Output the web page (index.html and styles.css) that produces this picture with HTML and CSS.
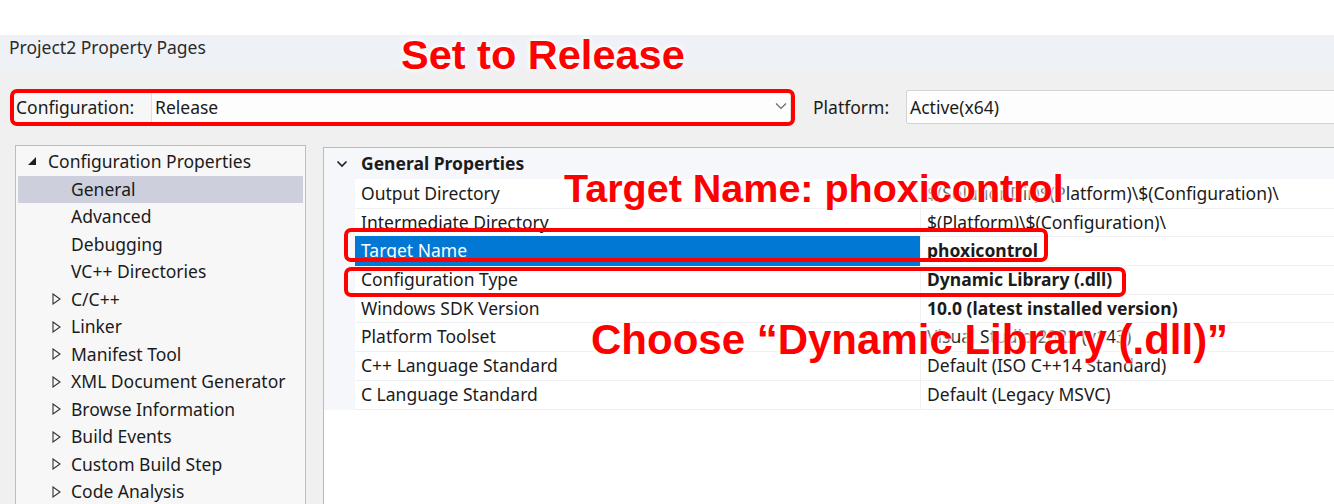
FILE: index.html
```html
<!DOCTYPE html>
<html lang="en">
<head>
<meta charset="utf-8">
<title>Project2 Property Pages</title>
<link rel="stylesheet" href="styles.css">
</head>
<body>
<div class="window">
  <div class="topgap"></div>
  <div class="titlebar">Project2 Property Pages</div>
  <div class="main">
    <div class="config-row">
      <div class="config-field">
        <span class="cfg-label">Configuration:</span>
        <div class="combo combo-config">
          <span>Release</span>
          <svg class="chev" width="12" height="8" viewBox="0 0 12 8"><path d="M1 1.5 L6 6.5 L11 1.5" fill="none" stroke="#6a6a6a" stroke-width="1.2"/></svg>
        </div>
      </div>
      <span class="plat-label">Platform:</span>
      <div class="combo combo-plat"><span>Active(x64)</span></div>
    </div>
    <div class="panes">
      <div class="tree">
        <div class="trow parent">
          <svg class="tri" width="10" height="10" viewBox="0 0 10 10"><polygon points="9,1 9,9 1,9" fill="#1e1e1e"/></svg>
          <span>Configuration Properties</span>
        </div>
        <div class="trow child sel"><span>General</span></div>
        <div class="trow child"><span>Advanced</span></div>
        <div class="trow child"><span>Debugging</span></div>
        <div class="trow child"><span>VC++ Directories</span></div>
        <div class="trow child exp"><svg class="tri2" width="9" height="12" viewBox="0 0 9 12"><polygon points="1,1 8,6 1,11" fill="none" stroke="#333" stroke-width="1.1"/></svg><span>C/C++</span></div>
        <div class="trow child exp"><svg class="tri2" width="9" height="12" viewBox="0 0 9 12"><polygon points="1,1 8,6 1,11" fill="none" stroke="#333" stroke-width="1.1"/></svg><span>Linker</span></div>
        <div class="trow child exp"><svg class="tri2" width="9" height="12" viewBox="0 0 9 12"><polygon points="1,1 8,6 1,11" fill="none" stroke="#333" stroke-width="1.1"/></svg><span>Manifest Tool</span></div>
        <div class="trow child exp"><svg class="tri2" width="9" height="12" viewBox="0 0 9 12"><polygon points="1,1 8,6 1,11" fill="none" stroke="#333" stroke-width="1.1"/></svg><span>XML Document Generator</span></div>
        <div class="trow child exp"><svg class="tri2" width="9" height="12" viewBox="0 0 9 12"><polygon points="1,1 8,6 1,11" fill="none" stroke="#333" stroke-width="1.1"/></svg><span>Browse Information</span></div>
        <div class="trow child exp"><svg class="tri2" width="9" height="12" viewBox="0 0 9 12"><polygon points="1,1 8,6 1,11" fill="none" stroke="#333" stroke-width="1.1"/></svg><span>Build Events</span></div>
        <div class="trow child exp"><svg class="tri2" width="9" height="12" viewBox="0 0 9 12"><polygon points="1,1 8,6 1,11" fill="none" stroke="#333" stroke-width="1.1"/></svg><span>Custom Build Step</span></div>
        <div class="trow child exp"><svg class="tri2" width="9" height="12" viewBox="0 0 9 12"><polygon points="1,1 8,6 1,11" fill="none" stroke="#333" stroke-width="1.1"/></svg><span>Code Analysis</span></div>
      </div>
      <div class="grid">
        <div class="ghead">
          <div class="gutter-h"><svg width="12" height="8" viewBox="0 0 12 8"><path d="M1.5 1.5 L6 6 L10.5 1.5" fill="none" stroke="#1e1e1e" stroke-width="1.6"/></svg></div>
          <div class="ghead-title">General Properties</div>
        </div>
        <div class="prow"><div class="gut"></div><div class="pname">Output Directory</div><div class="pval">$(SolutionDir)$(Platform)\$(Configuration)\</div></div>
        <div class="prow"><div class="gut"></div><div class="pname">Intermediate Directory</div><div class="pval">$(Platform)\$(Configuration)\</div></div>
        <div class="prow"><div class="gut"></div><div class="pname selected">Target Name</div><div class="pval bold">phoxicontrol</div></div>
        <div class="prow"><div class="gut"></div><div class="pname">Configuration Type</div><div class="pval bold">Dynamic Library (.dll)</div></div>
        <div class="prow"><div class="gut"></div><div class="pname">Windows SDK Version</div><div class="pval bold">10.0 (latest installed version)</div></div>
        <div class="prow"><div class="gut"></div><div class="pname">Platform Toolset</div><div class="pval">Visual Studio 2022 (v143)</div></div>
        <div class="prow"><div class="gut"></div><div class="pname">C++ Language Standard</div><div class="pval">Default (ISO C++14 Standard)</div></div>
        <div class="prow"><div class="gut"></div><div class="pname">C Language Standard</div><div class="pval">Default (Legacy MSVC)</div></div>
      </div>
    </div>
  </div>

  <div class="redbox box-config"></div>
  <div class="redbox box-target"></div>
  <div class="redbox box-type"></div>
  <div class="note note-release">Set to Release</div>
  <div class="note note-target">Target Name: phoxicontrol</div>
  <div class="note note-choose">Choose “Dynamic Library (.dll)”</div>
</div>
</body>
</html>
```

FILE: styles.css
```css
* { box-sizing: border-box; }
html, body { margin: 0; padding: 0; }
body {
  width: 1334px;
  height: 504px;
  overflow: hidden;
  background: #ffffff;
  font-family: "Noto Sans", "Open Sans", sans-serif;
  font-size: 17.5px;
  color: #1b1b1b;
}
.window {
  position: relative;
  width: 1334px;
  height: 504px;
  overflow: hidden;
}
.topgap { height: 35px; background: #ffffff; }
.titlebar {
  height: 35px;
  line-height: 25px;
  padding-left: 9px;
  background: #eef2f7;
  color: #2b2b2b;
}
.main {
  background: #f0f0f0;
  height: 434px;
  padding-top: 20px;
}
.config-row {
  display: flex;
  align-items: stretch;
  height: 34px;
}
.config-field {
  display: flex;
  flex-shrink: 0;
  margin-left: 14px;
  width: 777px;
  background: #f7f7f7;
}
.cfg-label {
  width: 137px;
  flex-shrink: 0;
  padding-left: 2px;
  line-height: 35px;
}
.combo {
  display: flex;
  align-items: center;
  justify-content: space-between;
  background: #fdfdfd;
  border: 1px solid #d4d4d4;
  line-height: 32px;
}
.combo-config {
  flex: 1;
  padding-left: 3px;
  padding-right: 3px;
  border-color: #e0e0e0;
}
.combo-plat {
  flex-shrink: 0;
  width: 440px;
  padding-left: 3px;
  border-radius: 2px;
}
.plat-label {
  flex-shrink: 0;
  margin-left: 22px;
  width: 93px;
  line-height: 35px;
}
.chev { margin-bottom: 2px; }

.panes {
  display: flex;
  align-items: flex-start;
  margin-top: 21px;
}
.tree {
  flex-shrink: 0;
  margin-left: 15px;
  width: 291px;
  height: 370px;
  background: #f7f7f7;
  border: 1px solid #bdbdbd;
  padding-top: 2px;
}
.trow {
  position: relative;
  height: 27.5px;
  line-height: 27.5px;
  margin: 0 2px;
  display: flex;
  align-items: center;
  white-space: nowrap;
}
.trow.parent { padding-left: 9px; }
.trow.parent .tri { margin-right: 11px; margin-bottom: 1px; }
.trow.child { padding-left: 53px; }
.trow.child.exp { padding-left: 34px; }
.trow .tri2 { margin-right: 10px; }
.trow.sel { background: #cdd0dc; }

.grid {
  flex-shrink: 0;
  margin-left: 17px;
  margin-top: 2px;
  width: 1030px;
  height: 370px;
  background: #ffffff;
  border: 1px solid #bcbcbc;
}
.ghead {
  display: flex;
  height: 31px;
  line-height: 31px;
  background: #f6f7fa;
}
.gutter-h {
  width: 31px;
  display: flex;
  align-items: center;
  justify-content: center;
  padding-left: 4px;
}
.ghead-title {
  padding-left: 6px;
  font-weight: bold;
}
.prow {
  display: grid;
  grid-template-columns: 31px 565px 1fr;
  height: 28.7px;
  line-height: 28.7px;
  white-space: nowrap;
}
.gut { background: #f6f7fa; }
.pname {
  padding-left: 6px;
  border-bottom: 1px solid #eef0f4;
}
.pname.selected {
  background: #0078d4;
  color: #ffffff;
  border-bottom-color: #0078d4;
}
.pval {
  padding-left: 6px;
  border-left: 1px solid #eef0f4;
  border-bottom: 1px solid #eef0f4;
  overflow: hidden;
}
.pval.bold { font-weight: bold; }

.redbox {
  position: absolute;
  border: 4px solid #ff0000;
  border-radius: 7px;
}
.box-config { left: 10px; top: 89px; width: 785px; height: 37px; }
.box-target { left: 344px; top: 228px; width: 704px; height: 34px; }
.box-type { left: 344px; top: 267px; width: 782px; height: 30px; }

.note {
  position: absolute;
  font-family: "Liberation Sans", Arial, sans-serif;
  font-weight: bold;
  color: #ff0000;
  line-height: 1;
  white-space: nowrap;
  text-shadow: 0 0 3px #ffffff, 0 0 5px #ffffff, 0 0 7px #ffffff;
}
.note-release { left: 401px; top: 34px; font-size: 41.5px; }
.note-target { left: 564px; top: 169px; font-size: 39.5px; }
.note-choose { left: 591px; top: 319px; font-size: 42px; }
```
